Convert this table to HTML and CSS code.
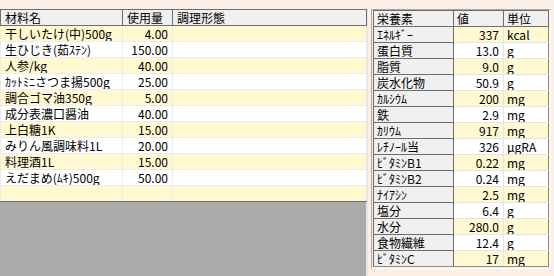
FILE: index.html
```html
<!DOCTYPE html>
<html lang="ja">
<head>
<meta charset="utf-8">
<link rel="stylesheet" href="styles.css">
</head>
<body>
<div class="app">
  <div class="left">
    <table class="ing">
      <colgroup><col class="c1"><col class="c2"><col class="c3"></colgroup>
      <thead>
        <tr><th>材料名</th><th>使用量</th><th>調理形態</th></tr>
      </thead>
      <tbody>
        <tr class="odd"><td>干しいたけ(中)500g</td><td class="num">4.00</td><td></td></tr>
        <tr><td>生ひじき(茹ｽﾃﾝ)</td><td class="num">150.00</td><td></td></tr>
        <tr class="odd"><td>人参/kg</td><td class="num">40.00</td><td></td></tr>
        <tr><td>ｶｯﾄﾐﾆさつま揚500g</td><td class="num">25.00</td><td></td></tr>
        <tr class="odd"><td>調合ゴマ油350g</td><td class="num">5.00</td><td></td></tr>
        <tr><td>成分表濃口醤油</td><td class="num">40.00</td><td></td></tr>
        <tr class="odd"><td>上白糖1K</td><td class="num">15.00</td><td></td></tr>
        <tr><td>みりん風調味料1L</td><td class="num">20.00</td><td></td></tr>
        <tr class="odd"><td>料理酒1L</td><td class="num">15.00</td><td></td></tr>
        <tr><td>えだまめ(ﾑｷ)500g</td><td class="num">50.00</td><td></td></tr>
        <tr class="odd last"><td></td><td></td><td></td></tr>
      </tbody>
    </table>
    <div class="blank"></div>
  </div>
  <div class="right">
    <table class="nut">
      <colgroup><col class="n1"><col class="n2"><col class="n3"></colgroup>
      <thead>
        <tr><th>栄養素</th><th>値</th><th>単位</th></tr>
      </thead>
      <tbody>
        <tr class="odd"><th>ｴﾈﾙｷﾞｰ</th><td class="num">337</td><td>kcal</td></tr>
        <tr><th>蛋白質</th><td class="num">13.0</td><td>g</td></tr>
        <tr class="odd"><th>脂質</th><td class="num">9.0</td><td>g</td></tr>
        <tr><th>炭水化物</th><td class="num">50.9</td><td>g</td></tr>
        <tr class="odd"><th>ｶﾙｼｳﾑ</th><td class="num">200</td><td>mg</td></tr>
        <tr><th>鉄</th><td class="num">2.9</td><td>mg</td></tr>
        <tr class="odd"><th>ｶﾘｳﾑ</th><td class="num">917</td><td>mg</td></tr>
        <tr><th>ﾚﾁﾉｰﾙ当</th><td class="num">326</td><td>μgRA</td></tr>
        <tr class="odd"><th>ﾋﾞﾀﾐﾝB1</th><td class="num">0.22</td><td>mg</td></tr>
        <tr><th>ﾋﾞﾀﾐﾝB2</th><td class="num">0.24</td><td>mg</td></tr>
        <tr class="odd"><th>ﾅｲｱｼﾝ</th><td class="num">2.5</td><td>mg</td></tr>
        <tr><th>塩分</th><td class="num">6.4</td><td>g</td></tr>
        <tr class="odd"><th>水分</th><td class="num">280.0</td><td>g</td></tr>
        <tr><th>食物繊維</th><td class="num">12.4</td><td>g</td></tr>
        <tr class="odd"><th>ﾋﾞﾀﾐﾝC</th><td class="num">17</td><td>mg</td></tr>
      </tbody>
    </table>
  </div>
</div>
</body>
</html>
```
FILE: styles.css
```css
html, body {
  margin: 0;
  padding: 0;
  background: #fcefe5;
}
body {
  font-family: "Noto Sans CJK JP", "Noto Sans", sans-serif;
  font-size: 12px;
  color: #000;
}
.app {
  display: flex;
  align-items: flex-start;
  height: 276px;
  overflow: hidden;
}
.left {
  width: 366px;
  height: 267px;
  margin-top: 9px;
  background: #ababab;
  border-right: 2px solid #e6e6e6;
  display: flex;
  flex-direction: column;
}
table {
  border-collapse: collapse;
  table-layout: fixed;
}
th, td {
  height: 15px;
  padding: 0;
  line-height: 15px;
  white-space: nowrap;
  overflow: hidden;
  font-weight: normal;
  text-align: left;
}
.ing {
  width: 366px;
  background: #fff;
}
.ing .c1 { width: 122px; }
.ing .c2 { width: 50px; }
.ing .c3 { width: 194px; }
.ing thead th {
  background: #f0f0f0;
  border: 1px solid #6e6e6e;
  padding-left: 4px;
  height: 15px;
  line-height: 15px;
}
.ing td {
  border: 1px solid #ececec;
  border-top: 0;
  padding-left: 4px;
}
.ing tr.odd td { background: #fff8d0; }
.ing td.num {
  text-align: right;
  padding-right: 4px;
  padding-left: 0;
}
.ing tr.last td { border-bottom: 1px solid #6d6d6d; }
.blank {
  flex: 1;
  background: #ababab;
}
.right {
  margin: 9px 0 0 3px;
  border: 1px solid;
  border-color: #a8a8a8 #ffffff #ffffff #a8a8a8;
  padding: 0 1px 1px 1px;
}
.nut {
  width: 175px;
  background: #fff;
}
.nut .n1 { width: 80px; }
.nut .n2 { width: 50px; }
.nut .n3 { width: 45px; }
.nut thead th {
  background: #f0f0f0;
  border: 1px solid #6e6e6e;
  padding-left: 3px;
}
.nut tbody th {
  background: #f0f0f0;
  border: 1px solid #6e6e6e;
  padding-left: 3px;
}
.nut td {
  border: 1px solid #e4e4e4;
  padding-left: 3px;
}
.nut tr.odd td { background: #fff8d0; }
.nut td.num {
  text-align: right;
  padding-right: 4px;
  padding-left: 0;
}
.nut td:last-child { border-right: 1px solid #8a8a8a; }
.nut tbody tr:last-child td, .nut tbody tr:last-child th { border-bottom: 1px solid #8a8a8a; }
```
